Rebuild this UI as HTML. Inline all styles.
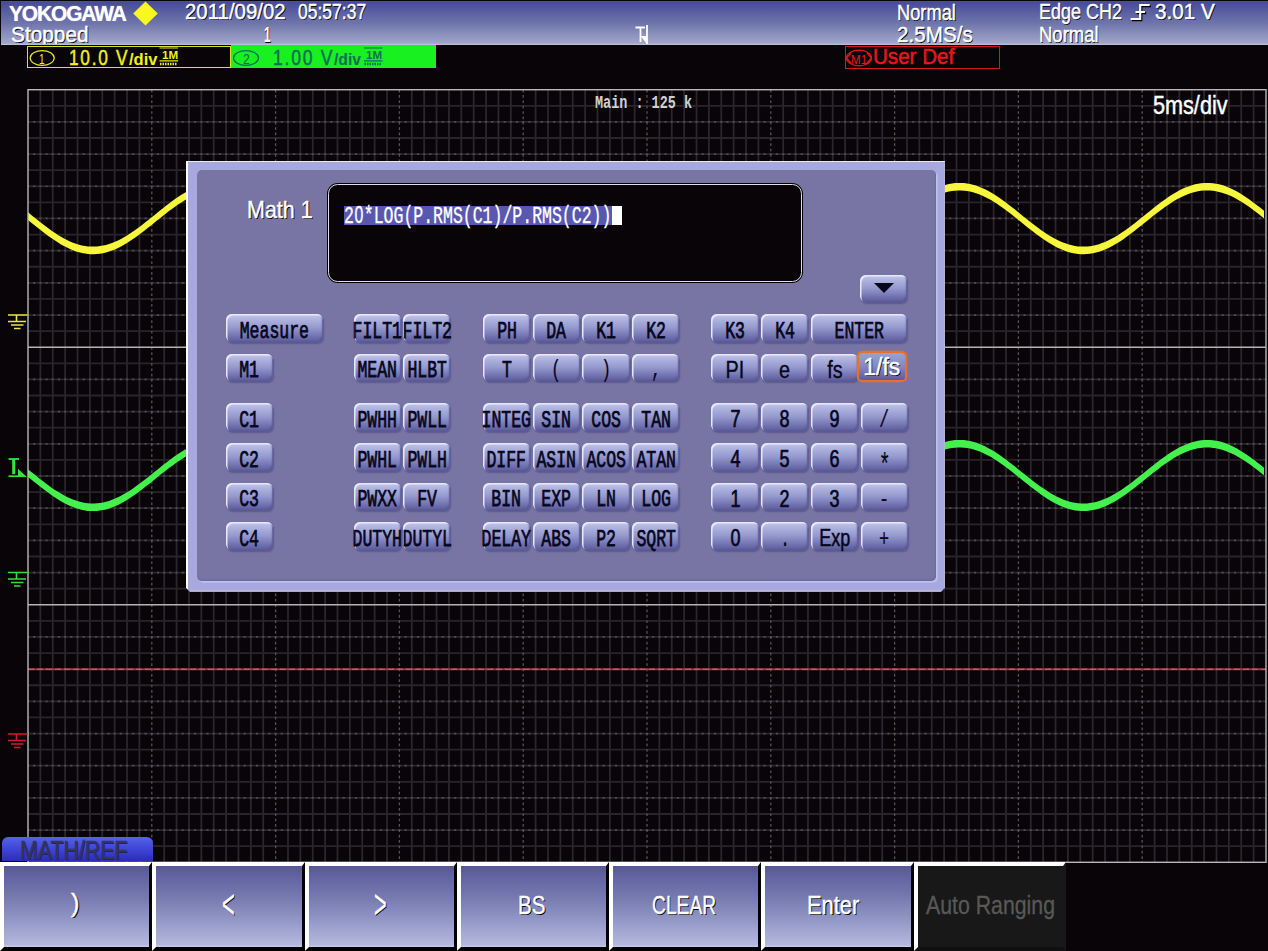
<!DOCTYPE html>
<html lang="en"><head><meta charset="utf-8"><title>Yokogawa DLM - Math 1 user defined</title>
<style>
html,body{margin:0;padding:0;background:#080408;}
body{width:1268px;height:951px;position:relative;overflow:hidden;font-family:"Liberation Sans", sans-serif;}
.abs{position:absolute}
.fs{font-family:"Liberation Sans", sans-serif}.fm{font-family:"Liberation Mono", monospace}
.t{position:absolute;white-space:pre;transform-origin:0 0;line-height:normal;display:block}
#hdr{position:absolute;left:1px;top:1px;width:1267px;height:43.5px;background:linear-gradient(#4c50a4 0,#484c98 3%,#6e74aa 50%,#a2a6ca 96%,#c4c8de 100%);overflow:hidden}
#ch1{position:absolute;left:27px;top:45.5px;width:204px;height:22.5px;border:1px solid #e0e020;box-sizing:border-box;background:#080408}
#ch2{position:absolute;left:231px;top:45px;width:205px;height:23px;background:#18f020}
#m1{position:absolute;left:844.5px;top:45.5px;width:155px;height:23px;border:1px solid #d81818;box-sizing:border-box}
#hdrt{position:absolute;left:0;top:0;width:1268px;height:44px;overflow:hidden}
svg.plot{position:absolute;left:0;top:0}
svg.ov{position:absolute;left:0;top:0;pointer-events:none}
#dlg{clip-path:polygon(0 0,100% 0,100% calc(100% - 4px),calc(100% - 4px) 100%,4px 100%,0 calc(100% - 4px));position:absolute;left:186px;top:161px;width:759px;height:430.8px;background:#a8a8e0;box-sizing:border-box;border-left:2px solid #fff;border-top:1px solid #e8e8f8;border-bottom:2.5px solid #bcb8d0;border-right:1.5px solid #b4b4d0}
#dlgin{position:absolute;left:197px;top:170px;width:738.5px;height:410.5px;background:#7874a4;border-radius:5px;box-shadow:1.8px 1.8px 0 0 #bcc0ea,inset -1px -1.5px 1px #6c6ca0}
#inp{position:absolute;left:327px;top:183px;width:476px;height:100px;background:#000;border-radius:11px;box-sizing:border-box}
#inp i{position:absolute;left:1.3px;top:1.3px;right:1.3px;bottom:1.3px;border:1.4px solid #e0e0e0;border-radius:9.5px;background:#080408}
#expr .z{display:inline-block;width:14.4px;text-align:center;font:normal 23px "Liberation Sans", sans-serif;-webkit-text-stroke:.35px #fff}
#sel{position:absolute;left:344px;top:206px;width:267.5px;height:19px;background:#5858b0}
#cur{position:absolute;left:611.5px;top:206px;width:10px;height:19px;background:#fff}
#expr{position:absolute;left:344px;top:202.2px;font:normal 24px "Liberation Mono", monospace;color:#fff;white-space:pre;transform-origin:0 0;transform:scaleX(.6875);line-height:normal;-webkit-text-stroke:.35px #fff}
.k{position:absolute;height:27.6px;border-radius:6px;background:linear-gradient(#c4c8ec 0,#b0b4e0 18%,#9498cc 50%,#6c6cac 85%,#6464a4 100%);box-shadow:inset 1.5px 1.5px 0 #e8e8fc,inset -1px -1.5px 1.5px #5a5a98,1px 1.5px 1.5px #5c5a8c;display:flex;align-items:center;justify-content:center;white-space:nowrap}
.k span{display:inline-block;color:#06061c;line-height:1;position:relative}
.k .m{font:normal 23.5px "Liberation Mono", monospace;transform:scaleX(.702);top:3.2px;-webkit-text-stroke:.75px #06061c}
.k .p{font:normal 23px "Liberation Sans", sans-serif;transform:scaleX(.86);top:2.6px;-webkit-text-stroke:.35px #06061c}
.k .d{font:normal 23px "Liberation Sans", sans-serif;transform:scaleX(.78);top:2.6px;-webkit-text-stroke:.7px #06061c}
.k .o{font:normal 23.5px "Liberation Mono", monospace;transform:scaleX(.72);top:3.2px;-webkit-text-stroke:.2px #06061c}
.k .ast{top:9px;font-size:32px;transform:scaleX(.62)}
.k .exp{transform:scaleX(.78);-webkit-text-stroke:.5px #06061c}
.k.sel{height:26.7px;box-shadow:0 0 0 2.3px #e87028;background:linear-gradient(#9ca0d0,#8488c0 50%,#5c5c9c);border-radius:3.5px}
.k.sel span{color:#fff;text-shadow:1px 1px 0 #000;-webkit-text-stroke:.5px #fff;font-size:23px;transform:scaleX(1.0);top:1px}
#dd{position:absolute;left:860px;top:274.8px;width:47.3px;height:27.2px}
#dd b{display:block;width:0;height:0;border-left:10.2px solid transparent;border-right:10.2px solid transparent;border-top:10.5px solid #06061c;position:relative;top:-.5px}
#tab{position:absolute;left:1.5px;top:837px;width:151px;height:24px;border-radius:6px 6px 0 0;background:linear-gradient(#5464e4,#4048d8 45%,#2c2cb8);}
.sk{position:absolute;top:861.5px;height:89.5px;box-sizing:border-box;border-left:4px solid #fff;border-top:4px solid #fff;border-right:3.5px solid #000;border-bottom:4px solid #000;background:linear-gradient(#585898,#7c80b4 45%,#b4b8de 97%,#c8cce8)}
.sk.dis{background:#181818;border-right-color:#181818;border-bottom-color:#101010}
</style></head><body>
<div id="hdr"></div>
<div id="ch1"></div><div id="ch2"></div><div id="m1"></div>
<svg class="plot" width="1268" height="951" viewBox="0 0 1268 951">
<path d="M40.38 89.7V862.3M52.76 89.7V862.3M65.14 89.7V862.3M77.52 89.7V862.3M89.90 89.7V862.3M102.28 89.7V862.3M114.66 89.7V862.3M127.04 89.7V862.3M139.42 89.7V862.3M164.18 89.7V862.3M176.56 89.7V862.3M188.94 89.7V862.3M201.32 89.7V862.3M213.70 89.7V862.3M226.08 89.7V862.3M238.46 89.7V862.3M250.84 89.7V862.3M263.22 89.7V862.3M287.98 89.7V862.3M300.36 89.7V862.3M312.74 89.7V862.3M325.12 89.7V862.3M337.50 89.7V862.3M349.88 89.7V862.3M362.26 89.7V862.3M374.64 89.7V862.3M387.02 89.7V862.3M411.78 89.7V862.3M424.16 89.7V862.3M436.54 89.7V862.3M448.92 89.7V862.3M461.30 89.7V862.3M473.68 89.7V862.3M486.06 89.7V862.3M498.44 89.7V862.3M510.82 89.7V862.3M535.58 89.7V862.3M547.96 89.7V862.3M560.34 89.7V862.3M572.72 89.7V862.3M585.10 89.7V862.3M597.48 89.7V862.3M609.86 89.7V862.3M622.24 89.7V862.3M634.62 89.7V862.3M659.38 89.7V862.3M671.76 89.7V862.3M684.14 89.7V862.3M696.52 89.7V862.3M708.90 89.7V862.3M721.28 89.7V862.3M733.66 89.7V862.3M746.04 89.7V862.3M758.42 89.7V862.3M783.18 89.7V862.3M795.56 89.7V862.3M807.94 89.7V862.3M820.32 89.7V862.3M832.70 89.7V862.3M845.08 89.7V862.3M857.46 89.7V862.3M869.84 89.7V862.3M882.22 89.7V862.3M906.98 89.7V862.3M919.36 89.7V862.3M931.74 89.7V862.3M944.12 89.7V862.3M956.50 89.7V862.3M968.88 89.7V862.3M981.26 89.7V862.3M993.64 89.7V862.3M1006.02 89.7V862.3M1030.78 89.7V862.3M1043.16 89.7V862.3M1055.54 89.7V862.3M1067.92 89.7V862.3M1080.30 89.7V862.3M1092.68 89.7V862.3M1105.06 89.7V862.3M1117.44 89.7V862.3M1129.82 89.7V862.3M1154.58 89.7V862.3M1166.96 89.7V862.3M1179.34 89.7V862.3M1191.72 89.7V862.3M1204.10 89.7V862.3M1216.48 89.7V862.3M1228.86 89.7V862.3M1241.24 89.7V862.3M1253.62 89.7V862.3" stroke="#2a262c" stroke-width="1.8" fill="none"/>
<path d="M28.0 105.80H1266.0M28.0 121.89H1266.0M28.0 137.99H1266.0M28.0 154.08H1266.0M28.0 170.18H1266.0M28.0 186.27H1266.0M28.0 202.37H1266.0M28.0 218.47H1266.0M28.0 234.56H1266.0M28.0 250.66H1266.0M28.0 266.75H1266.0M28.0 282.85H1266.0M28.0 298.95H1266.0M28.0 315.04H1266.0M28.0 331.14H1266.0M28.0 363.33H1266.0M28.0 379.42H1266.0M28.0 395.52H1266.0M28.0 411.62H1266.0M28.0 427.71H1266.0M28.0 443.81H1266.0M28.0 459.90H1266.0M28.0 476.00H1266.0M28.0 492.10H1266.0M28.0 508.19H1266.0M28.0 524.29H1266.0M28.0 540.38H1266.0M28.0 556.48H1266.0M28.0 572.57H1266.0M28.0 588.67H1266.0M28.0 620.86H1266.0M28.0 636.96H1266.0M28.0 653.05H1266.0M28.0 669.15H1266.0M28.0 685.25H1266.0M28.0 701.34H1266.0M28.0 717.44H1266.0M28.0 733.53H1266.0M28.0 749.63H1266.0M28.0 765.72H1266.0M28.0 781.82H1266.0M28.0 797.92H1266.0M28.0 814.01H1266.0M28.0 830.11H1266.0M28.0 846.20H1266.0" stroke="#28242a" stroke-width="1.8" fill="none"/>
<path d="M28.0 121.89H1266.0M28.0 154.08H1266.0M28.0 186.27H1266.0M28.0 218.47H1266.0M28.0 250.66H1266.0M28.0 282.85H1266.0M28.0 315.04H1266.0M28.0 379.42H1266.0M28.0 411.62H1266.0M28.0 443.81H1266.0M28.0 476.00H1266.0M28.0 508.19H1266.0M28.0 540.38H1266.0M28.0 572.57H1266.0M28.0 636.96H1266.0M28.0 669.15H1266.0M28.0 701.34H1266.0M28.0 733.53H1266.0M28.0 765.72H1266.0M28.0 797.92H1266.0M28.0 830.11H1266.0" stroke="#504c54" stroke-width="1.7" fill="none" stroke-dasharray="2.2 3.99" stroke-dashoffset="1.1"/>
<path d="M151.80 89.7V862.3M275.60 89.7V862.3M399.40 89.7V862.3M523.20 89.7V862.3M647.00 89.7V862.3M770.80 89.7V862.3M894.60 89.7V862.3M1018.40 89.7V862.3M1142.20 89.7V862.3" stroke="#565258" stroke-width="1.3" fill="none" stroke-dasharray="2.7 2.66"/>
<path d="M28.0 347.23H1266.0" stroke="#b4b4b4" stroke-width="1.4"/>
<path d="M28.0 604.77H1266.0" stroke="#b4b4b4" stroke-width="1.4"/>
<path d="M28.0 669.4H1266.0" stroke="#b82c40" stroke-width="1.6"/>
<path d="M28.0 669.2H1266.0" stroke="#e0a0a0" stroke-width="1" stroke-dasharray="6 3" opacity=".6"/>
<polygon points="28.0 212.3 31.0 214.8 34.0 217.2 37.0 219.6 40.0 222.0 43.0 224.3 46.0 226.6 49.0 228.8 52.0 231.0 55.0 233.0 58.0 234.9 61.0 236.8 64.0 238.4 67.0 240.0 70.0 241.4 73.0 242.7 76.0 243.8 79.0 244.7 82.0 245.4 85.0 246.0 88.0 246.4 91.0 246.6 94.0 246.6 97.0 246.5 100.0 246.1 103.0 245.6 106.0 244.9 109.0 244.0 112.0 243.0 115.0 241.8 118.0 240.4 121.0 238.9 124.0 237.2 127.0 235.4 130.0 233.5 133.0 231.5 136.0 229.4 139.0 227.2 142.0 224.9 145.0 222.6 148.0 220.2 151.0 217.8 154.0 215.4 157.0 213.0 160.0 210.6 163.0 208.2 166.0 205.8 169.0 203.5 172.0 201.3 175.0 199.1 178.0 197.0 181.0 195.1 184.0 193.2 187.0 191.5 190.0 189.9 193.0 188.4 196.0 187.2 199.0 186.0 202.0 185.0 205.0 184.2 208.0 183.6 211.0 183.2 214.0 182.9 217.0 182.9 220.0 183.0 223.0 183.3 226.0 183.7 229.0 184.4 232.0 185.2 235.0 186.2 238.0 187.4 241.0 188.7 244.0 190.2 247.0 191.8 250.0 193.6 253.0 195.5 256.0 197.4 259.0 199.5 262.0 201.7 265.0 204.0 268.0 206.3 271.0 208.6 274.0 211.0 277.0 213.5 280.0 215.9 283.0 218.3 286.0 220.7 289.0 223.1 292.0 225.4 295.0 227.6 298.0 229.8 301.0 231.9 304.0 233.9 307.0 235.8 310.0 237.6 313.0 239.2 316.0 240.7 319.0 242.0 322.0 243.2 325.0 244.2 328.0 245.1 331.0 245.7 334.0 246.2 337.0 246.5 340.0 246.6 343.0 246.6 346.0 246.3 349.0 245.9 352.0 245.3 355.0 244.5 358.0 243.6 361.0 242.4 364.0 241.1 367.0 239.7 370.0 238.1 373.0 236.4 376.0 234.6 379.0 232.6 382.0 230.5 385.0 228.4 388.0 226.1 391.0 223.9 394.0 221.5 397.0 219.1 400.0 216.7 403.0 214.3 406.0 211.8 409.0 209.4 412.0 207.1 415.0 204.7 418.0 202.4 421.0 200.2 424.0 198.1 427.0 196.1 430.0 194.2 433.0 192.4 436.0 190.7 439.0 189.2 442.0 187.8 445.0 186.6 448.0 185.5 451.0 184.6 454.0 183.9 457.0 183.4 460.0 183.0 463.0 182.9 466.0 182.9 469.0 183.1 472.0 183.5 475.0 184.0 478.0 184.8 481.0 185.7 484.0 186.8 487.0 188.0 490.0 189.4 493.0 190.9 496.0 192.6 499.0 194.4 502.0 196.4 505.0 198.4 508.0 200.5 511.0 202.7 514.0 205.0 517.0 207.4 520.0 209.8 523.0 212.2 526.0 214.6 529.0 217.0 532.0 219.4 535.0 221.8 538.0 224.2 541.0 226.5 544.0 228.7 547.0 230.8 550.0 232.9 553.0 234.8 556.0 236.6 559.0 238.3 562.0 239.9 565.0 241.3 568.0 242.6 571.0 243.7 574.0 244.6 577.0 245.4 580.0 246.0 583.0 246.4 586.0 246.6 589.0 246.6 592.0 246.5 595.0 246.2 598.0 245.6 601.0 245.0 604.0 244.1 607.0 243.1 610.0 241.8 613.0 240.5 616.0 239.0 619.0 237.3 622.0 235.6 625.0 233.7 628.0 231.6 631.0 229.5 634.0 227.3 637.0 225.1 640.0 222.8 643.0 220.4 646.0 218.0 649.0 215.6 652.0 213.1 655.0 210.7 658.0 208.3 661.0 206.0 664.0 203.7 667.0 201.4 670.0 199.2 673.0 197.2 676.0 195.2 679.0 193.3 682.0 191.6 685.0 190.0 688.0 188.5 691.0 187.2 694.0 186.1 697.0 185.1 700.0 184.3 703.0 183.7 706.0 183.2 709.0 182.9 712.0 182.9 715.0 182.9 718.0 183.2 721.0 183.7 724.0 184.3 727.0 185.2 730.0 186.2 733.0 187.3 736.0 188.6 739.0 190.1 742.0 191.7 745.0 193.5 748.0 195.3 751.0 197.3 754.0 199.4 757.0 201.6 760.0 203.8 763.0 206.1 766.0 208.5 769.0 210.9 772.0 213.3 775.0 215.7 778.0 218.1 781.0 220.5 784.0 222.9 787.0 225.2 790.0 227.5 793.0 229.7 796.0 231.8 799.0 233.8 802.0 235.7 805.0 237.4 808.0 239.1 811.0 240.6 814.0 241.9 817.0 243.1 820.0 244.2 823.0 245.0 826.0 245.7 829.0 246.2 832.0 246.5 835.0 246.6 838.0 246.6 841.0 246.4 844.0 245.9 847.0 245.3 850.0 244.6 853.0 243.6 856.0 242.5 859.0 241.2 862.0 239.8 865.0 238.2 868.0 236.5 871.0 234.7 874.0 232.7 877.0 230.7 880.0 228.5 883.0 226.3 886.0 224.0 889.0 221.7 892.0 219.3 895.0 216.9 898.0 214.4 901.0 212.0 904.0 209.6 907.0 207.2 910.0 204.9 913.0 202.6 916.0 200.4 919.0 198.3 922.0 196.2 925.0 194.3 928.0 192.5 931.0 190.8 934.0 189.3 937.0 187.9 940.0 186.7 943.0 185.6 946.0 184.7 949.0 184.0 952.0 183.4 955.0 183.1 958.0 182.9 961.0 182.9 964.0 183.1 967.0 183.4 970.0 184.0 973.0 184.7 976.0 185.6 979.0 186.7 982.0 187.9 985.0 189.3 988.0 190.8 991.0 192.5 994.0 194.3 997.0 196.2 1000.0 198.3 1003.0 200.4 1006.0 202.6 1009.0 204.9 1012.0 207.2 1015.0 209.6 1018.0 212.0 1021.0 214.4 1024.0 216.9 1027.0 219.3 1030.0 221.7 1033.0 224.0 1036.0 226.3 1039.0 228.5 1042.0 230.7 1045.0 232.7 1048.0 234.7 1051.0 236.5 1054.0 238.2 1057.0 239.8 1060.0 241.2 1063.0 242.5 1066.0 243.6 1069.0 244.6 1072.0 245.3 1075.0 245.9 1078.0 246.4 1081.0 246.6 1084.0 246.6 1087.0 246.5 1090.0 246.2 1093.0 245.7 1096.0 245.0 1099.0 244.2 1102.0 243.1 1105.0 241.9 1108.0 240.6 1111.0 239.1 1114.0 237.4 1117.0 235.7 1120.0 233.8 1123.0 231.8 1126.0 229.7 1129.0 227.5 1132.0 225.2 1135.0 222.9 1138.0 220.5 1141.0 218.1 1144.0 215.7 1147.0 213.3 1150.0 210.9 1153.0 208.5 1156.0 206.1 1159.0 203.8 1162.0 201.6 1165.0 199.4 1168.0 197.3 1171.0 195.3 1174.0 193.5 1177.0 191.7 1180.0 190.1 1183.0 188.6 1186.0 187.3 1189.0 186.2 1192.0 185.2 1195.0 184.3 1198.0 183.7 1201.0 183.2 1204.0 182.9 1207.0 182.9 1210.0 182.9 1213.0 183.2 1216.0 183.7 1219.0 184.3 1222.0 185.1 1225.0 186.1 1228.0 187.2 1231.0 188.5 1234.0 190.0 1237.0 191.6 1240.0 193.3 1243.0 195.2 1246.0 197.2 1249.0 199.2 1252.0 201.4 1255.0 203.7 1258.0 206.0 1261.0 208.3 1264.0 210.7 1264.0 218.3 1261.0 215.9 1258.0 213.6 1255.0 211.3 1252.0 209.0 1249.0 206.8 1246.0 204.8 1243.0 202.8 1240.0 200.9 1237.0 199.2 1234.0 197.6 1231.0 196.1 1228.0 194.8 1225.0 193.7 1222.0 192.7 1219.0 191.9 1216.0 191.3 1213.0 190.8 1210.0 190.5 1207.0 190.5 1204.0 190.5 1201.0 190.8 1198.0 191.3 1195.0 191.9 1192.0 192.8 1189.0 193.8 1186.0 194.9 1183.0 196.2 1180.0 197.7 1177.0 199.3 1174.0 201.1 1171.0 202.9 1168.0 204.9 1165.0 207.0 1162.0 209.2 1159.0 211.4 1156.0 213.7 1153.0 216.1 1150.0 218.5 1147.0 220.9 1144.0 223.3 1141.0 225.7 1138.0 228.1 1135.0 230.5 1132.0 232.8 1129.0 235.1 1126.0 237.3 1123.0 239.4 1120.0 241.4 1117.0 243.3 1114.0 245.0 1111.0 246.7 1108.0 248.2 1105.0 249.5 1102.0 250.7 1099.0 251.8 1096.0 252.6 1093.0 253.3 1090.0 253.8 1087.0 254.1 1084.0 254.2 1081.0 254.2 1078.0 254.0 1075.0 253.5 1072.0 252.9 1069.0 252.2 1066.0 251.2 1063.0 250.1 1060.0 248.8 1057.0 247.4 1054.0 245.8 1051.0 244.1 1048.0 242.3 1045.0 240.3 1042.0 238.3 1039.0 236.1 1036.0 233.9 1033.0 231.6 1030.0 229.3 1027.0 226.9 1024.0 224.5 1021.0 222.0 1018.0 219.6 1015.0 217.2 1012.0 214.8 1009.0 212.5 1006.0 210.2 1003.0 208.0 1000.0 205.9 997.0 203.8 994.0 201.9 991.0 200.1 988.0 198.4 985.0 196.9 982.0 195.5 979.0 194.3 976.0 193.2 973.0 192.3 970.0 191.6 967.0 191.0 964.0 190.7 961.0 190.5 958.0 190.5 955.0 190.7 952.0 191.0 949.0 191.6 946.0 192.3 943.0 193.2 940.0 194.3 937.0 195.5 934.0 196.9 931.0 198.4 928.0 200.1 925.0 201.9 922.0 203.8 919.0 205.9 916.0 208.0 913.0 210.2 910.0 212.5 907.0 214.8 904.0 217.2 901.0 219.6 898.0 222.0 895.0 224.5 892.0 226.9 889.0 229.3 886.0 231.6 883.0 233.9 880.0 236.1 877.0 238.3 874.0 240.3 871.0 242.3 868.0 244.1 865.0 245.8 862.0 247.4 859.0 248.8 856.0 250.1 853.0 251.2 850.0 252.2 847.0 252.9 844.0 253.5 841.0 254.0 838.0 254.2 835.0 254.2 832.0 254.1 829.0 253.8 826.0 253.3 823.0 252.6 820.0 251.8 817.0 250.7 814.0 249.5 811.0 248.2 808.0 246.7 805.0 245.0 802.0 243.3 799.0 241.4 796.0 239.4 793.0 237.3 790.0 235.1 787.0 232.8 784.0 230.5 781.0 228.1 778.0 225.7 775.0 223.3 772.0 220.9 769.0 218.5 766.0 216.1 763.0 213.7 760.0 211.4 757.0 209.2 754.0 207.0 751.0 204.9 748.0 202.9 745.0 201.1 742.0 199.3 739.0 197.7 736.0 196.2 733.0 194.9 730.0 193.8 727.0 192.8 724.0 191.9 721.0 191.3 718.0 190.8 715.0 190.5 712.0 190.5 709.0 190.5 706.0 190.8 703.0 191.3 700.0 191.9 697.0 192.7 694.0 193.7 691.0 194.8 688.0 196.1 685.0 197.6 682.0 199.2 679.0 200.9 676.0 202.8 673.0 204.8 670.0 206.8 667.0 209.0 664.0 211.3 661.0 213.6 658.0 215.9 655.0 218.3 652.0 220.7 649.0 223.2 646.0 225.6 643.0 228.0 640.0 230.4 637.0 232.7 634.0 234.9 631.0 237.1 628.0 239.2 625.0 241.3 622.0 243.2 619.0 244.9 616.0 246.6 613.0 248.1 610.0 249.4 607.0 250.7 604.0 251.7 601.0 252.6 598.0 253.2 595.0 253.8 592.0 254.1 589.0 254.2 586.0 254.2 583.0 254.0 580.0 253.6 577.0 253.0 574.0 252.2 571.0 251.3 568.0 250.2 565.0 248.9 562.0 247.5 559.0 245.9 556.0 244.2 553.0 242.4 550.0 240.5 547.0 238.4 544.0 236.3 541.0 234.1 538.0 231.8 535.0 229.4 532.0 227.0 529.0 224.6 526.0 222.2 523.0 219.8 520.0 217.4 517.0 215.0 514.0 212.6 511.0 210.3 508.0 208.1 505.0 206.0 502.0 204.0 499.0 202.0 496.0 200.2 493.0 198.5 490.0 197.0 487.0 195.6 484.0 194.4 481.0 193.3 478.0 192.4 475.0 191.6 472.0 191.1 469.0 190.7 466.0 190.5 463.0 190.5 460.0 190.6 457.0 191.0 454.0 191.5 451.0 192.2 448.0 193.1 445.0 194.2 442.0 195.4 439.0 196.8 436.0 198.3 433.0 200.0 430.0 201.8 427.0 203.7 424.0 205.7 421.0 207.8 418.0 210.0 415.0 212.3 412.0 214.7 409.0 217.0 406.0 219.4 403.0 221.9 400.0 224.3 397.0 226.7 394.0 229.1 391.0 231.5 388.0 233.7 385.0 236.0 382.0 238.1 379.0 240.2 376.0 242.2 373.0 244.0 370.0 245.7 367.0 247.3 364.0 248.7 361.0 250.0 358.0 251.2 355.0 252.1 352.0 252.9 349.0 253.5 346.0 253.9 343.0 254.2 340.0 254.2 337.0 254.1 334.0 253.8 331.0 253.3 328.0 252.7 325.0 251.8 322.0 250.8 319.0 249.6 316.0 248.3 313.0 246.8 310.0 245.2 307.0 243.4 304.0 241.5 301.0 239.5 298.0 237.4 295.0 235.2 292.0 233.0 289.0 230.7 286.0 228.3 283.0 225.9 280.0 223.5 277.0 221.1 274.0 218.6 271.0 216.2 268.0 213.9 265.0 211.6 262.0 209.3 259.0 207.1 256.0 205.0 253.0 203.1 250.0 201.2 247.0 199.4 244.0 197.8 241.0 196.3 238.0 195.0 235.0 193.8 232.0 192.8 229.0 192.0 226.0 191.3 223.0 190.9 220.0 190.6 217.0 190.5 214.0 190.5 211.0 190.8 208.0 191.2 205.0 191.8 202.0 192.6 199.0 193.6 196.0 194.8 193.0 196.0 190.0 197.5 187.0 199.1 184.0 200.8 181.0 202.7 178.0 204.6 175.0 206.7 172.0 208.9 169.0 211.1 166.0 213.4 163.0 215.8 160.0 218.2 157.0 220.6 154.0 223.0 151.0 225.4 148.0 227.8 145.0 230.2 142.0 232.5 139.0 234.8 136.0 237.0 133.0 239.1 130.0 241.1 127.0 243.0 124.0 244.8 121.0 246.5 118.0 248.0 115.0 249.4 112.0 250.6 109.0 251.6 106.0 252.5 103.0 253.2 100.0 253.7 97.0 254.1 94.0 254.2 91.0 254.2 88.0 254.0 85.0 253.6 82.0 253.0 79.0 252.3 76.0 251.4 73.0 250.3 70.0 249.0 67.0 247.6 64.0 246.0 61.0 244.4 58.0 242.5 55.0 240.6 52.0 238.6 49.0 236.4 46.0 234.2 43.0 231.9 40.0 229.6 37.0 227.2 34.0 224.8 31.0 222.4 28.0 219.9" fill="#f6f63c"/>
<polygon points="28.0 469.3 31.0 471.7 34.0 474.1 37.0 476.5 40.0 478.9 43.0 481.2 46.0 483.5 49.0 485.7 52.0 487.9 55.0 489.9 58.0 491.8 61.0 493.6 64.0 495.3 67.0 496.9 70.0 498.3 73.0 499.5 76.0 500.6 79.0 501.5 82.0 502.3 85.0 502.9 88.0 503.3 91.0 503.5 94.0 503.5 97.0 503.3 100.0 503.0 103.0 502.5 106.0 501.8 109.0 500.9 112.0 499.8 115.0 498.6 118.0 497.3 121.0 495.8 124.0 494.1 127.0 492.3 130.0 490.4 133.0 488.4 136.0 486.3 139.0 484.1 142.0 481.8 145.0 479.5 148.0 477.2 151.0 474.8 154.0 472.3 157.0 469.9 160.0 467.5 163.0 465.1 166.0 462.8 169.0 460.5 172.0 458.3 175.0 456.1 178.0 454.0 181.0 452.1 184.0 450.2 187.0 448.5 190.0 446.9 193.0 445.5 196.0 444.2 199.0 443.1 202.0 442.1 205.0 441.3 208.0 440.7 211.0 440.2 214.0 440.0 217.0 439.9 220.0 440.0 223.0 440.3 226.0 440.8 229.0 441.4 232.0 442.3 235.0 443.3 238.0 444.4 241.0 445.8 244.0 447.2 247.0 448.8 250.0 450.6 253.0 452.5 256.0 454.4 259.0 456.5 262.0 458.7 265.0 460.9 268.0 463.2 271.0 465.6 274.0 468.0 277.0 470.4 280.0 472.8 283.0 475.2 286.0 477.6 289.0 480.0 292.0 482.3 295.0 484.6 298.0 486.7 301.0 488.8 304.0 490.8 307.0 492.7 310.0 494.4 313.0 496.1 316.0 497.5 319.0 498.9 322.0 500.1 325.0 501.1 328.0 501.9 331.0 502.6 334.0 503.1 337.0 503.4 340.0 503.5 343.0 503.4 346.0 503.2 349.0 502.8 352.0 502.2 355.0 501.4 358.0 500.4 361.0 499.3 364.0 498.0 367.0 496.6 370.0 495.0 373.0 493.3 376.0 491.4 379.0 489.5 382.0 487.4 385.0 485.3 388.0 483.1 391.0 480.8 394.0 478.4 397.0 476.0 400.0 473.6 403.0 471.2 406.0 468.8 409.0 466.4 412.0 464.0 415.0 461.7 418.0 459.4 421.0 457.2 424.0 455.1 427.0 453.1 430.0 451.2 433.0 449.4 436.0 447.8 439.0 446.2 442.0 444.9 445.0 443.6 448.0 442.6 451.0 441.7 454.0 441.0 457.0 440.4 460.0 440.1 463.0 439.9 466.0 439.9 469.0 440.1 472.0 440.5 475.0 441.1 478.0 441.8 481.0 442.7 484.0 443.8 487.0 445.0 490.0 446.4 493.0 448.0 496.0 449.6 499.0 451.5 502.0 453.4 505.0 455.4 508.0 457.5 511.0 459.7 514.0 462.0 517.0 464.3 520.0 466.7 523.0 469.1 526.0 471.5 529.0 474.0 532.0 476.4 535.0 478.7 538.0 481.1 541.0 483.4 544.0 485.6 547.0 487.7 550.0 489.8 553.0 491.7 556.0 493.5 559.0 495.2 562.0 496.8 565.0 498.2 568.0 499.5 571.0 500.6 574.0 501.5 577.0 502.2 580.0 502.8 583.0 503.2 586.0 503.5 589.0 503.5 592.0 503.3 595.0 503.0 598.0 502.5 601.0 501.8 604.0 500.9 607.0 499.9 610.0 498.7 613.0 497.4 616.0 495.9 619.0 494.2 622.0 492.4 625.0 490.5 628.0 488.5 631.0 486.4 634.0 484.3 637.0 482.0 640.0 479.7 643.0 477.3 646.0 474.9 649.0 472.5 652.0 470.1 655.0 467.7 658.0 465.3 661.0 462.9 664.0 460.6 667.0 458.4 670.0 456.2 673.0 454.2 676.0 452.2 679.0 450.4 682.0 448.6 685.0 447.0 688.0 445.6 691.0 444.3 694.0 443.1 697.0 442.1 700.0 441.3 703.0 440.7 706.0 440.3 709.0 440.0 712.0 439.9 715.0 440.0 718.0 440.3 721.0 440.7 724.0 441.4 727.0 442.2 730.0 443.2 733.0 444.4 736.0 445.7 739.0 447.1 742.0 448.7 745.0 450.5 748.0 452.3 751.0 454.3 754.0 456.4 757.0 458.5 760.0 460.8 763.0 463.1 766.0 465.4 769.0 467.8 772.0 470.2 775.0 472.7 778.0 475.1 781.0 477.5 784.0 479.8 787.0 482.2 790.0 484.4 793.0 486.6 796.0 488.7 799.0 490.7 802.0 492.6 805.0 494.3 808.0 496.0 811.0 497.5 814.0 498.8 817.0 500.0 820.0 501.0 823.0 501.9 826.0 502.5 829.0 503.0 832.0 503.4 835.0 503.5 838.0 503.4 841.0 503.2 844.0 502.8 847.0 502.2 850.0 501.4 853.0 500.5 856.0 499.4 859.0 498.1 862.0 496.7 865.0 495.1 868.0 493.4 871.0 491.6 874.0 489.6 877.0 487.6 880.0 485.4 883.0 483.2 886.0 480.9 889.0 478.6 892.0 476.2 895.0 473.8 898.0 471.4 901.0 469.0 904.0 466.6 907.0 464.2 910.0 461.9 913.0 459.6 916.0 457.4 919.0 455.3 922.0 453.2 925.0 451.3 928.0 449.5 931.0 447.9 934.0 446.3 937.0 444.9 940.0 443.7 943.0 442.6 946.0 441.7 949.0 441.0 952.0 440.5 955.0 440.1 958.0 439.9 961.0 439.9 964.0 440.1 967.0 440.5 970.0 441.0 973.0 441.7 976.0 442.6 979.0 443.7 982.0 444.9 985.0 446.3 988.0 447.9 991.0 449.5 994.0 451.3 997.0 453.2 1000.0 455.3 1003.0 457.4 1006.0 459.6 1009.0 461.9 1012.0 464.2 1015.0 466.6 1018.0 469.0 1021.0 471.4 1024.0 473.8 1027.0 476.2 1030.0 478.6 1033.0 480.9 1036.0 483.2 1039.0 485.4 1042.0 487.6 1045.0 489.6 1048.0 491.6 1051.0 493.4 1054.0 495.1 1057.0 496.7 1060.0 498.1 1063.0 499.4 1066.0 500.5 1069.0 501.4 1072.0 502.2 1075.0 502.8 1078.0 503.2 1081.0 503.4 1084.0 503.5 1087.0 503.4 1090.0 503.0 1093.0 502.5 1096.0 501.9 1099.0 501.0 1102.0 500.0 1105.0 498.8 1108.0 497.5 1111.0 496.0 1114.0 494.3 1117.0 492.6 1120.0 490.7 1123.0 488.7 1126.0 486.6 1129.0 484.4 1132.0 482.2 1135.0 479.8 1138.0 477.5 1141.0 475.1 1144.0 472.7 1147.0 470.2 1150.0 467.8 1153.0 465.4 1156.0 463.1 1159.0 460.8 1162.0 458.5 1165.0 456.4 1168.0 454.3 1171.0 452.3 1174.0 450.5 1177.0 448.7 1180.0 447.1 1183.0 445.7 1186.0 444.4 1189.0 443.2 1192.0 442.2 1195.0 441.4 1198.0 440.7 1201.0 440.3 1204.0 440.0 1207.0 439.9 1210.0 440.0 1213.0 440.3 1216.0 440.7 1219.0 441.3 1222.0 442.1 1225.0 443.1 1228.0 444.3 1231.0 445.6 1234.0 447.0 1237.0 448.6 1240.0 450.4 1243.0 452.2 1246.0 454.2 1249.0 456.2 1252.0 458.4 1255.0 460.6 1258.0 462.9 1261.0 465.3 1264.0 467.7 1264.0 475.3 1261.0 472.9 1258.0 470.5 1255.0 468.2 1252.0 466.0 1249.0 463.8 1246.0 461.8 1243.0 459.8 1240.0 458.0 1237.0 456.2 1234.0 454.6 1231.0 453.2 1228.0 451.9 1225.0 450.7 1222.0 449.7 1219.0 448.9 1216.0 448.3 1213.0 447.9 1210.0 447.6 1207.0 447.5 1204.0 447.6 1201.0 447.9 1198.0 448.3 1195.0 449.0 1192.0 449.8 1189.0 450.8 1186.0 452.0 1183.0 453.3 1180.0 454.7 1177.0 456.3 1174.0 458.1 1171.0 459.9 1168.0 461.9 1165.0 464.0 1162.0 466.1 1159.0 468.4 1156.0 470.7 1153.0 473.0 1150.0 475.4 1147.0 477.8 1144.0 480.3 1141.0 482.7 1138.0 485.1 1135.0 487.4 1132.0 489.8 1129.0 492.0 1126.0 494.2 1123.0 496.3 1120.0 498.3 1117.0 500.2 1114.0 501.9 1111.0 503.6 1108.0 505.1 1105.0 506.4 1102.0 507.6 1099.0 508.6 1096.0 509.5 1093.0 510.1 1090.0 510.6 1087.0 511.0 1084.0 511.1 1081.0 511.0 1078.0 510.8 1075.0 510.4 1072.0 509.8 1069.0 509.0 1066.0 508.1 1063.0 507.0 1060.0 505.7 1057.0 504.3 1054.0 502.7 1051.0 501.0 1048.0 499.2 1045.0 497.2 1042.0 495.2 1039.0 493.0 1036.0 490.8 1033.0 488.5 1030.0 486.2 1027.0 483.8 1024.0 481.4 1021.0 479.0 1018.0 476.6 1015.0 474.2 1012.0 471.8 1009.0 469.5 1006.0 467.2 1003.0 465.0 1000.0 462.9 997.0 460.8 994.0 458.9 991.0 457.1 988.0 455.5 985.0 453.9 982.0 452.5 979.0 451.3 976.0 450.2 973.0 449.3 970.0 448.6 967.0 448.1 964.0 447.7 961.0 447.5 958.0 447.5 955.0 447.7 952.0 448.1 949.0 448.6 946.0 449.3 943.0 450.2 940.0 451.3 937.0 452.5 934.0 453.9 931.0 455.5 928.0 457.1 925.0 458.9 922.0 460.8 919.0 462.9 916.0 465.0 913.0 467.2 910.0 469.5 907.0 471.8 904.0 474.2 901.0 476.6 898.0 479.0 895.0 481.4 892.0 483.8 889.0 486.2 886.0 488.5 883.0 490.8 880.0 493.0 877.0 495.2 874.0 497.2 871.0 499.2 868.0 501.0 865.0 502.7 862.0 504.3 859.0 505.7 856.0 507.0 853.0 508.1 850.0 509.0 847.0 509.8 844.0 510.4 841.0 510.8 838.0 511.0 835.0 511.1 832.0 511.0 829.0 510.6 826.0 510.1 823.0 509.5 820.0 508.6 817.0 507.6 814.0 506.4 811.0 505.1 808.0 503.6 805.0 501.9 802.0 500.2 799.0 498.3 796.0 496.3 793.0 494.2 790.0 492.0 787.0 489.8 784.0 487.4 781.0 485.1 778.0 482.7 775.0 480.3 772.0 477.8 769.0 475.4 766.0 473.0 763.0 470.7 760.0 468.4 757.0 466.1 754.0 464.0 751.0 461.9 748.0 459.9 745.0 458.1 742.0 456.3 739.0 454.7 736.0 453.3 733.0 452.0 730.0 450.8 727.0 449.8 724.0 449.0 721.0 448.3 718.0 447.9 715.0 447.6 712.0 447.5 709.0 447.6 706.0 447.9 703.0 448.3 700.0 448.9 697.0 449.7 694.0 450.7 691.0 451.9 688.0 453.2 685.0 454.6 682.0 456.2 679.0 458.0 676.0 459.8 673.0 461.8 670.0 463.8 667.0 466.0 664.0 468.2 661.0 470.5 658.0 472.9 655.0 475.3 652.0 477.7 649.0 480.1 646.0 482.5 643.0 484.9 640.0 487.3 637.0 489.6 634.0 491.9 631.0 494.0 628.0 496.1 625.0 498.1 622.0 500.0 619.0 501.8 616.0 503.5 613.0 505.0 610.0 506.3 607.0 507.5 604.0 508.5 601.0 509.4 598.0 510.1 595.0 510.6 592.0 510.9 589.0 511.1 586.0 511.1 583.0 510.8 580.0 510.4 577.0 509.8 574.0 509.1 571.0 508.2 568.0 507.1 565.0 505.8 562.0 504.4 559.0 502.8 556.0 501.1 553.0 499.3 550.0 497.4 547.0 495.3 544.0 493.2 541.0 491.0 538.0 488.7 535.0 486.3 532.0 484.0 529.0 481.6 526.0 479.1 523.0 476.7 520.0 474.3 517.0 471.9 514.0 469.6 511.0 467.3 508.0 465.1 505.0 463.0 502.0 461.0 499.0 459.1 496.0 457.2 493.0 455.6 490.0 454.0 487.0 452.6 484.0 451.4 481.0 450.3 478.0 449.4 475.0 448.7 472.0 448.1 469.0 447.7 466.0 447.5 463.0 447.5 460.0 447.7 457.0 448.0 454.0 448.6 451.0 449.3 448.0 450.2 445.0 451.2 442.0 452.5 439.0 453.8 436.0 455.4 433.0 457.0 430.0 458.8 427.0 460.7 424.0 462.7 421.0 464.8 418.0 467.0 415.0 469.3 412.0 471.6 409.0 474.0 406.0 476.4 403.0 478.8 400.0 481.2 397.0 483.6 394.0 486.0 391.0 488.4 388.0 490.7 385.0 492.9 382.0 495.0 379.0 497.1 376.0 499.0 373.0 500.9 370.0 502.6 367.0 504.2 364.0 505.6 361.0 506.9 358.0 508.0 355.0 509.0 352.0 509.8 349.0 510.4 346.0 510.8 343.0 511.0 340.0 511.1 337.0 511.0 334.0 510.7 331.0 510.2 328.0 509.5 325.0 508.7 322.0 507.7 319.0 506.5 316.0 505.1 313.0 503.7 310.0 502.0 307.0 500.3 304.0 498.4 301.0 496.4 298.0 494.3 295.0 492.2 292.0 489.9 289.0 487.6 286.0 485.2 283.0 482.8 280.0 480.4 277.0 478.0 274.0 475.6 271.0 473.2 268.0 470.8 265.0 468.5 262.0 466.3 259.0 464.1 256.0 462.0 253.0 460.1 250.0 458.2 247.0 456.4 244.0 454.8 241.0 453.4 238.0 452.0 235.0 450.9 232.0 449.9 229.0 449.0 226.0 448.4 223.0 447.9 220.0 447.6 217.0 447.5 214.0 447.6 211.0 447.8 208.0 448.3 205.0 448.9 202.0 449.7 199.0 450.7 196.0 451.8 193.0 453.1 190.0 454.5 187.0 456.1 184.0 457.8 181.0 459.7 178.0 461.6 175.0 463.7 172.0 465.9 169.0 468.1 166.0 470.4 163.0 472.7 160.0 475.1 157.0 477.5 154.0 479.9 151.0 482.4 148.0 484.8 145.0 487.1 142.0 489.4 139.0 491.7 136.0 493.9 133.0 496.0 130.0 498.0 127.0 499.9 124.0 501.7 121.0 503.4 118.0 504.9 115.0 506.2 112.0 507.4 109.0 508.5 106.0 509.4 103.0 510.1 100.0 510.6 97.0 510.9 94.0 511.1 91.0 511.1 88.0 510.9 85.0 510.5 82.0 509.9 79.0 509.1 76.0 508.2 73.0 507.1 70.0 505.9 67.0 504.5 64.0 502.9 61.0 501.2 58.0 499.4 55.0 497.5 52.0 495.5 49.0 493.3 46.0 491.1 43.0 488.8 40.0 486.5 37.0 484.1 34.0 481.7 31.0 479.3 28.0 476.9" fill="#44f04c"/>
<rect x="28.0" y="89.7" width="1238.0" height="772.5999999999999" fill="none" stroke="#b8b8b8" stroke-width="1.4"/>
<g stroke="#e8e840" stroke-width="1.6" fill="none"><path d="M8 315H27.5M8 321.5H26M16.5 315V321.5M11 325H23.5M14 328.5H20.5"/></g>
<g stroke="#30e038" stroke-width="1.6" fill="none"><path d="M8 572.5H27.5M8 579.0H26M16.5 572.5V579.0M11 582.5H23.5M14 586.0H20.5"/></g>
<g stroke="#d01c2c" stroke-width="1.6" fill="none"><path d="M8 734H27.5M8 740.5H26M16.5 734V740.5M11 744H23.5M14 747.5H20.5"/></g>
<g stroke="#30e838" fill="#30e838"><path d="M8.5 459H19" stroke-width="1.8"/><path d="M13.7 459V474.2" stroke-width="3"/><path d="M8.5 476.2H25" stroke-width="1.6"/><path d="M18 468.8L26.8 476.9H18Z" stroke="none"/></g>
</svg>
<div id="dlg"></div><div id="dlgin"></div>
<div id="inp"><i></i></div><div id="sel"></div><div id="cur"></div>
<div id="expr">2<span class="z">0</span>*LOG(P.RMS(C1)/P.RMS(C2))</div>
<div class="k" id="dd"><b></b></div>
<div class="k" style="left:225.5px;top:314.3px;width:97.2px"><span class="m">Measure</span></div>
<div class="k" style="left:353.5px;top:314.3px;width:47.3px"><span class="m">FILT1</span></div>
<div class="k" style="left:403.2px;top:314.3px;width:47.3px"><span class="m">FILT2</span></div>
<div class="k" style="left:483.0px;top:314.3px;width:47.3px"><span class="m">PH</span></div>
<div class="k" style="left:532.7px;top:314.3px;width:47.3px"><span class="m">DA</span></div>
<div class="k" style="left:582.4px;top:314.3px;width:47.3px"><span class="m">K1</span></div>
<div class="k" style="left:632.1px;top:314.3px;width:47.3px"><span class="m">K2</span></div>
<div class="k" style="left:711.4px;top:314.3px;width:47.3px"><span class="m">K3</span></div>
<div class="k" style="left:761.1px;top:314.3px;width:47.3px"><span class="m">K4</span></div>
<div class="k" style="left:810.8px;top:314.3px;width:96.7px"><span class="m">ENTER</span></div>
<div class="k" style="left:225.5px;top:353.8px;width:47.3px"><span class="m">M1</span></div>
<div class="k" style="left:353.5px;top:353.8px;width:47.3px"><span class="m">MEAN</span></div>
<div class="k" style="left:403.2px;top:353.8px;width:47.3px"><span class="m">HLBT</span></div>
<div class="k" style="left:483.0px;top:353.8px;width:47.3px"><span class="m">T</span></div>
<div class="k" style="left:532.7px;top:353.8px;width:47.3px"><span class="o">(</span></div>
<div class="k" style="left:582.4px;top:353.8px;width:47.3px"><span class="o">)</span></div>
<div class="k" style="left:632.1px;top:353.8px;width:47.3px"><span class="o">,</span></div>
<div class="k" style="left:711.4px;top:353.8px;width:47.3px"><span class="p">PI</span></div>
<div class="k" style="left:761.1px;top:353.8px;width:47.3px"><span class="p">e</span></div>
<div class="k" style="left:810.8px;top:353.8px;width:47.3px"><span class="p">fs</span></div>
<div class="k sel" style="left:858.5px;top:353.0px;width:46.6px"><span class="p">1/fs</span></div>
<div class="k" style="left:225.5px;top:403.3px;width:47.3px"><span class="m">C1</span></div>
<div class="k" style="left:353.5px;top:403.3px;width:47.3px"><span class="m">PWHH</span></div>
<div class="k" style="left:403.2px;top:403.3px;width:47.3px"><span class="m">PWLL</span></div>
<div class="k" style="left:483.0px;top:403.3px;width:47.3px"><span class="m">INTEG</span></div>
<div class="k" style="left:532.7px;top:403.3px;width:47.3px"><span class="m">SIN</span></div>
<div class="k" style="left:582.4px;top:403.3px;width:47.3px"><span class="m">COS</span></div>
<div class="k" style="left:632.1px;top:403.3px;width:47.3px"><span class="m">TAN</span></div>
<div class="k" style="left:711.4px;top:403.3px;width:47.3px"><span class="d">7</span></div>
<div class="k" style="left:761.1px;top:403.3px;width:47.3px"><span class="d">8</span></div>
<div class="k" style="left:810.8px;top:403.3px;width:47.3px"><span class="d">9</span></div>
<div class="k" style="left:860.5px;top:403.3px;width:47.3px"><span class="o">/</span></div>
<div class="k" style="left:225.5px;top:443.3px;width:47.3px"><span class="m">C2</span></div>
<div class="k" style="left:353.5px;top:443.3px;width:47.3px"><span class="m">PWHL</span></div>
<div class="k" style="left:403.2px;top:443.3px;width:47.3px"><span class="m">PWLH</span></div>
<div class="k" style="left:483.0px;top:443.3px;width:47.3px"><span class="m">DIFF</span></div>
<div class="k" style="left:532.7px;top:443.3px;width:47.3px"><span class="m">ASIN</span></div>
<div class="k" style="left:582.4px;top:443.3px;width:47.3px"><span class="m">ACOS</span></div>
<div class="k" style="left:632.1px;top:443.3px;width:47.3px"><span class="m">ATAN</span></div>
<div class="k" style="left:711.4px;top:443.3px;width:47.3px"><span class="d">4</span></div>
<div class="k" style="left:761.1px;top:443.3px;width:47.3px"><span class="d">5</span></div>
<div class="k" style="left:810.8px;top:443.3px;width:47.3px"><span class="d">6</span></div>
<div class="k" style="left:860.5px;top:443.3px;width:47.3px"><span class="o ast">*</span></div>
<div class="k" style="left:225.5px;top:482.9px;width:47.3px"><span class="m">C3</span></div>
<div class="k" style="left:353.5px;top:482.9px;width:47.3px"><span class="m">PWXX</span></div>
<div class="k" style="left:403.2px;top:482.9px;width:47.3px"><span class="m">FV</span></div>
<div class="k" style="left:483.0px;top:482.9px;width:47.3px"><span class="m">BIN</span></div>
<div class="k" style="left:532.7px;top:482.9px;width:47.3px"><span class="m">EXP</span></div>
<div class="k" style="left:582.4px;top:482.9px;width:47.3px"><span class="m">LN</span></div>
<div class="k" style="left:632.1px;top:482.9px;width:47.3px"><span class="m">LOG</span></div>
<div class="k" style="left:711.4px;top:482.9px;width:47.3px"><span class="d">1</span></div>
<div class="k" style="left:761.1px;top:482.9px;width:47.3px"><span class="d">2</span></div>
<div class="k" style="left:810.8px;top:482.9px;width:47.3px"><span class="d">3</span></div>
<div class="k" style="left:860.5px;top:482.9px;width:47.3px"><span class="o">-</span></div>
<div class="k" style="left:225.5px;top:522.4px;width:47.3px"><span class="m">C4</span></div>
<div class="k" style="left:353.5px;top:522.4px;width:47.3px"><span class="m">DUTYH</span></div>
<div class="k" style="left:403.2px;top:522.4px;width:47.3px"><span class="m">DUTYL</span></div>
<div class="k" style="left:483.0px;top:522.4px;width:47.3px"><span class="m">DELAY</span></div>
<div class="k" style="left:532.7px;top:522.4px;width:47.3px"><span class="m">ABS</span></div>
<div class="k" style="left:582.4px;top:522.4px;width:47.3px"><span class="m">P2</span></div>
<div class="k" style="left:632.1px;top:522.4px;width:47.3px"><span class="m">SQRT</span></div>
<div class="k" style="left:711.4px;top:522.4px;width:47.3px"><span class="d">0</span></div>
<div class="k" style="left:761.1px;top:522.4px;width:47.3px"><span class="o">.</span></div>
<div class="k" style="left:810.8px;top:522.4px;width:47.3px"><span class="p exp">Exp</span></div>
<div class="k" style="left:860.5px;top:522.4px;width:47.3px"><span class="o">+</span></div>
<div id="tab"></div>
<div class="sk" style="left:0.00px;width:152.25px"></div><div class="sk" style="left:152.25px;width:152.25px"></div><div class="sk" style="left:304.50px;width:152.25px"></div><div class="sk" style="left:456.75px;width:152.25px"></div><div class="sk" style="left:609.00px;width:152.25px"></div><div class="sk" style="left:761.25px;width:152.25px"></div><div class="sk dis" style="left:913.50px;width:152.25px"></div>
<svg class="ov" width="1268" height="951" viewBox="0 0 1268 951">
<path d="M145.5 1.5L157.8 13.4L145.5 25.5L133.2 13.4Z" fill="#f8f820"/>
<ellipse cx="42.2" cy="58" rx="12" ry="7.3" fill="none" stroke="#e8e820" stroke-width="1.2"/>
<path d="M159.5 48H178M159.5 60.8H178" stroke="#e8e820" stroke-width="1.2"/><path d="M160 64H177.5" stroke="#e8e820" stroke-width="2.4" stroke-dasharray="1.5 1"/>
<ellipse cx="246" cy="58" rx="12.5" ry="7.3" fill="none" stroke="#0c6c58" stroke-width="1.2"/>
<path d="M364 48H382.5M364 60.8H382.5" stroke="#0c6c58" stroke-width="1.2"/><path d="M364.5 64H382" stroke="#0c6c58" stroke-width="2.4" stroke-dasharray="1.5 1"/>
<ellipse cx="859" cy="58" rx="12.5" ry="7.8" fill="none" stroke="#e01818" stroke-width="1.3"/>
<path d="M846.5 58L851 53M846.5 58L851 63M871.5 58L867 53M871.5 58L867 63" stroke="#e01818" stroke-width="1.2" fill="none"/>
<g stroke="#fff" stroke-width="1.8" fill="none"><path d="M635.5 27.5H645M640.5 27.5V42"/><path d="M647 25V44"/></g><path d="M640.5 36L647 44V36Z" fill="#fff"/>
<g stroke="#000" stroke-width="2" fill="none" transform="translate(1.2,1.2)"><path d="M1130.6 19H1140.2V5H1149.7M1135.5 12H1145"/></g>
<g stroke="#fff" stroke-width="2.2" fill="none"><path d="M1130.6 19H1140.2V5H1149.7M1135.5 12H1145"/></g>
</svg>
<div id="hdrt">
<span class="t fs" style="left:9.00px;top:0.64px;font-size:22.5px;color:#fff;transform:scaleX(0.9299);font-weight:bold;text-shadow:0 0 1px #e8e8ff;letter-spacing:-1.2px;">YOKOGAWA</span>
<span class="t fs" style="left:11.05px;top:21.59px;font-size:22px;color:#fff;transform:scaleX(0.9470);text-shadow:1px 1px 0 #000;-webkit-text-stroke:0.45px #fff;">Stopped</span>
<span class="t fs" style="left:185.07px;top:-0.91px;font-size:22px;color:#fff;transform:scaleX(0.9278);text-shadow:1px 1px 0 #000;-webkit-text-stroke:0.45px #fff;">2011/09/02</span>
<span class="t fs" style="left:297.50px;top:-0.91px;font-size:22px;color:#fff;transform:scaleX(0.7962);text-shadow:1px 1px 0 #000;-webkit-text-stroke:0.45px #fff;">05:57:37</span>
<span class="t fs" style="left:263.95px;top:22.09px;font-size:22px;color:#fff;transform:scaleX(0.5455);font-weight:bold;text-shadow:1px 1px 0 #000;">1</span>
<span class="t fs" style="left:896.87px;top:-0.41px;font-size:22px;color:#fff;transform:scaleX(0.8303);text-shadow:1px 1px 0 #000;-webkit-text-stroke:0.45px #fff;">Normal</span>
<span class="t fs" style="left:896.76px;top:22.09px;font-size:22px;color:#fff;transform:scaleX(0.9386);text-shadow:1px 1px 0 #000;-webkit-text-stroke:0.45px #fff;">2.5MS/s</span>
<span class="t fs" style="left:1039.18px;top:-0.91px;font-size:22px;color:#fff;transform:scaleX(0.8178);text-shadow:1px 1px 0 #000;-webkit-text-stroke:0.45px #fff;">Edge CH2</span>
<span class="t fs" style="left:1155.30px;top:-0.91px;font-size:22px;color:#fff;transform:scaleX(0.9416);text-shadow:1px 1px 0 #000;-webkit-text-stroke:0.45px #fff;">3.01 V</span>
<span class="t fs" style="left:1039.16px;top:22.09px;font-size:22px;color:#fff;transform:scaleX(0.8404);text-shadow:1px 1px 0 #000;-webkit-text-stroke:0.45px #fff;">Normal</span>
</div>
<span class="t fs" style="left:68.72px;top:44.59px;font-size:22px;color:#f0f020;transform:scaleX(0.7845);-webkit-text-stroke:0.45px #f0f020;letter-spacing:2.2px;">10.0 V</span>
<span class="t fs" style="left:128.50px;top:49.62px;font-size:17px;color:#f0f020;transform:scaleX(0.9722);font-weight:bold;">/div</span>
<span class="t fs" style="left:38.79px;top:50.83px;font-size:14px;color:#f0f020;transform:scaleX(0.7143);">1</span>
<span class="t fs" style="left:162.00px;top:48.89px;font-size:11.5px;color:#f0f020;transform:scaleX(1.0068);font-weight:bold;">1M</span>
<span class="t fs" style="left:273.20px;top:44.59px;font-size:22px;color:#0c6c58;transform:scaleX(0.7980);-webkit-text-stroke:0.45px #0c6c58;letter-spacing:2.2px;">1.00 V</span>
<span class="t fs" style="left:333.50px;top:49.62px;font-size:17px;color:#0c6c58;transform:scaleX(0.9219);font-weight:bold;">/div</span>
<span class="t fs" style="left:242.50px;top:50.83px;font-size:14px;color:#0c6c58;transform:scaleX(0.8750);">2</span>
<span class="t fs" style="left:366.00px;top:48.89px;font-size:11.5px;color:#0c6c58;transform:scaleX(1.0068);font-weight:bold;">1M</span>
<span class="t fs" style="left:873.26px;top:44.29px;font-size:22px;color:#e81818;transform:scaleX(0.9356);-webkit-text-stroke:0.45px #e81818;">User Def</span>
<span class="t fs" style="left:850.61px;top:51.73px;font-size:13px;color:#e81818;transform:scaleX(0.8913);">M1</span>
<span class="t fm" style="left:595.20px;top:92.51px;font-size:18px;color:#d0d0d0;transform:scaleX(0.7487);font-weight:bold;">Main : 125 k</span>
<span class="t fs" style="left:1152.87px;top:89.97px;font-size:26px;color:#fff;transform:scaleX(0.8320);-webkit-text-stroke:0.45px #fff;">5ms/div</span>
<span class="t fs" style="left:246.60px;top:196.28px;font-size:24px;color:#fff;transform:scaleX(0.8955);text-shadow:1px 1px 0 #000;-webkit-text-stroke:0.45px #fff;">Math 1</span>
<span class="t fs" style="left:20.36px;top:835.47px;font-size:26px;color:#34345c;transform:scaleX(0.8199);text-shadow:1px 1px 0 #1c1c70;-webkit-text-stroke:0.5px #34345c;">MATH/REF</span>
<span class="t fs" style="left:71.00px;top:888.92px;font-size:25.5px;color:#fff;transform:scaleX(1.0000);text-shadow:1.3px 1.3px 0 #000;-webkit-text-stroke:0.4px #fff;">)</span>
<span class="t fs" style="left:222.45px;top:882.30px;font-size:40px;color:#fff;transform:scaleX(0.5476);text-shadow:1.3px 1.3px 0 #000;-webkit-text-stroke:0.3px #fff;">&lt;</span>
<span class="t fs" style="left:373.95px;top:882.30px;font-size:40px;color:#fff;transform:scaleX(0.5476);text-shadow:1.3px 1.3px 0 #000;-webkit-text-stroke:0.3px #fff;">&gt;</span>
<span class="t fs" style="left:518.39px;top:890.52px;font-size:25.5px;color:#fff;transform:scaleX(0.8062);text-shadow:1.3px 1.3px 0 #000;-webkit-text-stroke:0.4px #fff;">BS</span>
<span class="t fs" style="left:652.25px;top:890.52px;font-size:25.5px;color:#fff;transform:scaleX(0.7535);text-shadow:1.3px 1.3px 0 #000;-webkit-text-stroke:0.4px #fff;">CLEAR</span>
<span class="t fs" style="left:807.28px;top:890.52px;font-size:25.5px;color:#fff;transform:scaleX(0.8578);text-shadow:1.3px 1.3px 0 #000;-webkit-text-stroke:0.4px #fff;">Enter</span>
<span class="t fs" style="left:926.00px;top:890.52px;font-size:25.5px;color:#585858;transform:scaleX(0.8347);-webkit-text-stroke:0.3px #585858;">Auto Ranging</span>
</body></html>
